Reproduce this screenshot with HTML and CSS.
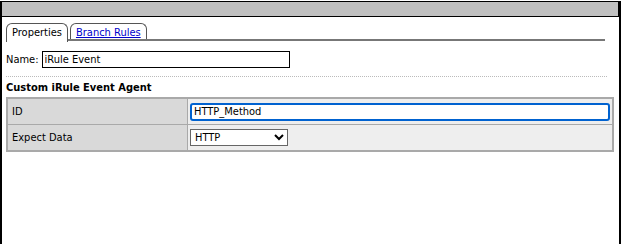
FILE: index.html
```html
<!DOCTYPE html>
<html lang="en">
<head>
    <meta charset="UTF-8">
    <title>Custom iRule Event Agent</title>
    <link rel="stylesheet" href="styles.css">
</head>
<body>
    <div class="frame">
        <div class="titlebar"></div>

        <div class="tabs">
            <div class="tab active">Properties</div>
            <div class="tab"><a href="#">Branch Rules</a></div>
        </div>

        <div class="name-row">
            <label for="name">Name:</label>
            <input id="name" type="text" value="iRule Event">
        </div>

        <h3 class="section-title">Custom iRule Event Agent</h3>
        <table class="props">
            <tr>
                <td class="label">ID</td>
                <td class="value"><input class="id-input" type="text" value="HTTP_Method" autofocus></td>
            </tr>
            <tr>
                <td class="label">Expect Data</td>
                <td class="value">
                    <select class="data-select">
                        <option>HTTP</option>
                        <option>SSL</option>
                    </select>
                </td>
            </tr>
        </table>
    </div>
</body>
</html>
```

FILE: styles.css
```css
body {
    margin: 0;
    font-family: "DejaVu Sans Condensed", "DejaVu Sans", sans-serif;
    font-size: 11px;
    color: #000;
    background: #fff;
}
.frame {
    width: 617px;
    height: 244px;
    border-left: 2px solid #000;
    border-right: 2px solid #000;
    box-sizing: content-box;
}
.titlebar {
    height: 14px;
    margin: 1px 0 0 0;
    background-color: #c0c0c0;
    border: 1px solid #000;
    border-left: none;
}
.tabs {
    display: flex;
    gap: 2px;
    margin: 6px 14px 0 4px;
    border-bottom: 2px solid #777;
    height: 16px;
}
.tab {
    border: 1px solid #555;
    border-bottom: none;
    border-radius: 6px 6px 0 0;
    padding: 2px 5px 0 5px;
    background: #fff;
}
.tab a { color: #0000cc; }
.tab.active {
    height: 16px;
    margin-bottom: -2px;
}
.name-row {
    display: flex;
    align-items: center;
    gap: 3px;
    margin: 10px 0 0 4px;
}
.name-row input {
    width: 242px;
    height: 15px;
    border: 1px solid #000;
    padding: 0 2px;
    font: inherit;
    font-size: 11px;
}
.section-title {
    margin: 8px 12px 0 4px;
    padding-top: 4px;
    border-top: 1px dotted #bbb;
    font-size: 11px;
}
.props {
    margin: 3px 0 0 4px;
    width: 608px;
    border-collapse: collapse;
    border: 2px solid #a9a9a9;
}
.props td {
    border: 1px solid #a9a9a9;
    height: 25px;
    padding: 0 4px;
}
.props .label {
    width: 173px;
    background: #d9d9d9;
}
.props .value {
    background: #eeeeee;
    padding: 0 2px;
}
.id-input {
    width: 412px;
    height: 14px;
    border: 2px solid #0062d0;
    border-radius: 3px;
    padding: 0 2px;
    font: inherit;
    outline: none;
}
.data-select {
    width: 98px;
    height: 17px;
    font: inherit;
    border: 1px solid #666;
    background: #fff;
    border-radius: 0;
}
```
